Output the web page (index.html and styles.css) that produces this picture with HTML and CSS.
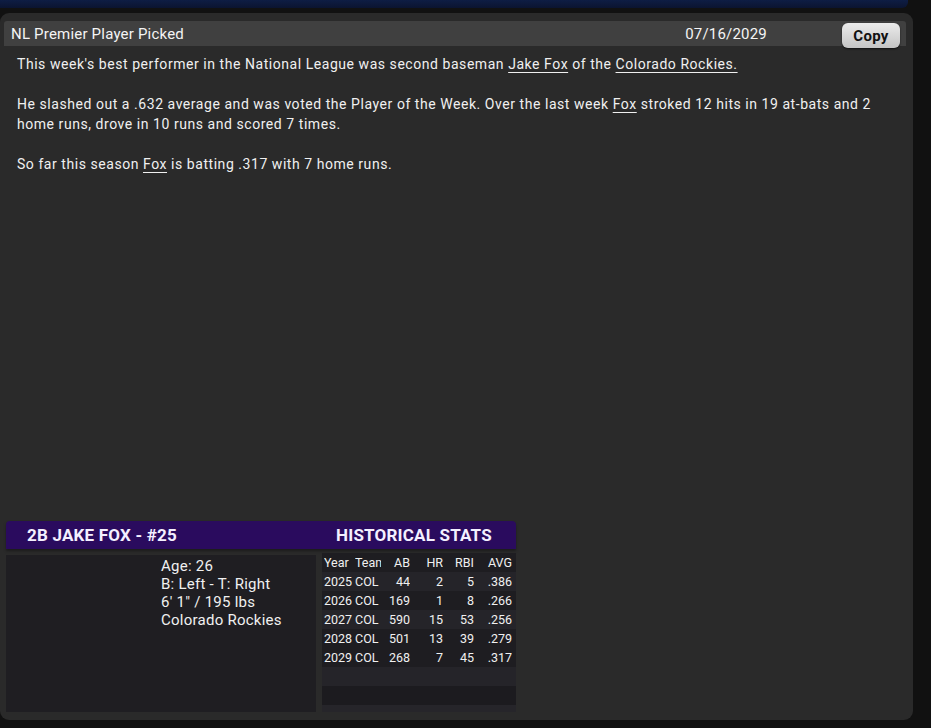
FILE: index.html
```html
<!DOCTYPE html>
<html>
<head>
<meta charset="utf-8">
<link rel="stylesheet" href="styles.css">
</head>
<body>
<div class="topbar"></div>
<div class="panel">
  <div class="titlebar">
    <span class="title">NL Premier Player Picked</span>
    <span class="date">07/16/2029</span>
    <button class="copy">Copy</button>
  </div>
  <div class="story">
    <p>This week's best performer in the National League was second baseman <u>Jake Fox</u> of the <u>Colorado Rockies.</u></p>
    <p>He slashed out a .632 average and was voted the Player of the Week. Over the last week <u>Fox</u> stroked 12 hits in 19 at-bats and 2 home runs, drove in 10 runs and scored 7 times.</p>
    <p>So far this season <u>Fox</u> is batting .317 with 7 home runs.</p>
  </div>
  <div class="card">
    <div class="cardhead">
      <span class="name">2B JAKE FOX - #25</span>
      <span class="hist">HISTORICAL STATS</span>
    </div>
    <div class="cardbody">
      <div class="info">
        <div>Age: 26</div>
        <div>B: Left - T: Right</div>
        <div>6' 1" / 195 lbs</div>
        <div>Colorado Rockies</div>
      </div>
      <div class="stats">
        <div class="row hdr"><span class="c yr">Year</span><span class="c tm">Team</span><span class="c n ab">AB</span><span class="c n hr">HR</span><span class="c n rbi">RBI</span><span class="c n avg">AVG</span></div>
        <div class="row alt"><span class="c yr">2025</span><span class="c tm">COL</span><span class="c n ab">44</span><span class="c n hr">2</span><span class="c n rbi">5</span><span class="c n avg">.386</span></div>
        <div class="row"><span class="c yr">2026</span><span class="c tm">COL</span><span class="c n ab">169</span><span class="c n hr">1</span><span class="c n rbi">8</span><span class="c n avg">.266</span></div>
        <div class="row alt"><span class="c yr">2027</span><span class="c tm">COL</span><span class="c n ab">590</span><span class="c n hr">15</span><span class="c n rbi">53</span><span class="c n avg">.256</span></div>
        <div class="row"><span class="c yr">2028</span><span class="c tm">COL</span><span class="c n ab">501</span><span class="c n hr">13</span><span class="c n rbi">39</span><span class="c n avg">.279</span></div>
        <div class="row"><span class="c yr">2029</span><span class="c tm">COL</span><span class="c n ab">268</span><span class="c n hr">7</span><span class="c n rbi">45</span><span class="c n avg">.317</span></div>
        <div class="row alt empty"></div>
        <div class="row dark empty"></div>
      </div>
    </div>
  </div>
</div>
</body>
</html>
```

FILE: styles.css
```css
html, body {
  margin: 0;
  padding: 0;
  background: #111111;
  font-family: Roboto, "Liberation Sans", sans-serif;
  color: #eeeeee;
  width: 931px;
  height: 728px;
  overflow: hidden;
}

.topbar {
  width: 908px;
  height: 8px;
  background: linear-gradient(#0e1d44, #0b1430);
  border-bottom-right-radius: 6px;
}

.panel {
  margin-top: 5px;
  width: 913px;
  height: 707px;
  box-sizing: border-box;
  background: #2a2a2a;
  border-radius: 9px;
  padding: 8px 7px 0 4px;
  display: flex;
  flex-direction: column;
}

.titlebar {
  height: 25px;
  background: #404040;
  border-radius: 3px 3px 0 0;
  display: flex;
  align-items: center;
  font-size: 15px;
  letter-spacing: 0.2px;
  color: #f4f4f4;
}

.title {
  padding-left: 7px;
}

.date {
  margin-left: auto;
  margin-right: 75px;
}

.copy {
  width: 58px;
  height: 25px;
  margin-top: 2px;
  margin-right: 6px;
  align-self: flex-start;
  border: none;
  border-radius: 6px;
  background: linear-gradient(#ececec, #c4c4c4);
  color: #111;
  font-family: Roboto, "Liberation Sans", sans-serif;
  font-size: 15px;
  font-weight: bold;
  letter-spacing: 0.3px;
  padding: 0;
  box-shadow: 0 1px 2px rgba(0,0,0,0.6);
}

.story {
  padding: 8px 0 0 13px;
  font-size: 14px;
  line-height: 20px;
  letter-spacing: 0.55px;
  color: #f0f0f0;
  flex: 1;
}

.story p {
  margin: 0 0 20px 0;
}

.story u {
  text-decoration-thickness: 1px;
  text-underline-offset: 3px;
}

.card {
  width: 510px;
  margin-left: 2px;
  margin-bottom: 8px;
}

.cardhead {
  height: 28px;
  background: #2a0b5e;
  border-radius: 4px 4px 0 0;
  display: flex;
  align-items: center;
  font-weight: bold;
  font-size: 17px;
  letter-spacing: 0.2px;
  color: #f4f0ff;
  box-shadow: 0 2px 3px rgba(0,0,0,0.35);
}

.name {
  padding-left: 21px;
  width: 309px;
}

.cardbody {
  display: flex;
  gap: 6px;
  margin-top: 4px;
}

.info {
  width: 310px;
  height: 157px;
  margin-top: 2px;
  box-sizing: border-box;
  background: #1f1e22;
  padding: 2px 0 0 155px;
  font-size: 15px;
  line-height: 18px;
  letter-spacing: 0.25px;
  color: #f0f0f0;
}

.stats {
  width: 194px;
  height: 159px;
  background: #26252a;
  display: flex;
  flex-direction: column;
}

.row {
  height: 19px;
  display: flex;
  align-items: center;
  background: #1e1d21;
  font-size: 12.5px;
  color: #f0f0f0;
  padding-left: 2px;
}

.row.alt {
  background: #252429;
}

.row.dark {
  background: #1c1b1f;
}

.c {
  display: block;
  white-space: nowrap;
  overflow: hidden;
}

.yr { width: 31px; }
.tm { width: 26px; }
.n { text-align: right; }
.ab { width: 29px; }
.hr { width: 33px; }
.rbi { width: 31px; }
.avg { width: 38px; }
```
